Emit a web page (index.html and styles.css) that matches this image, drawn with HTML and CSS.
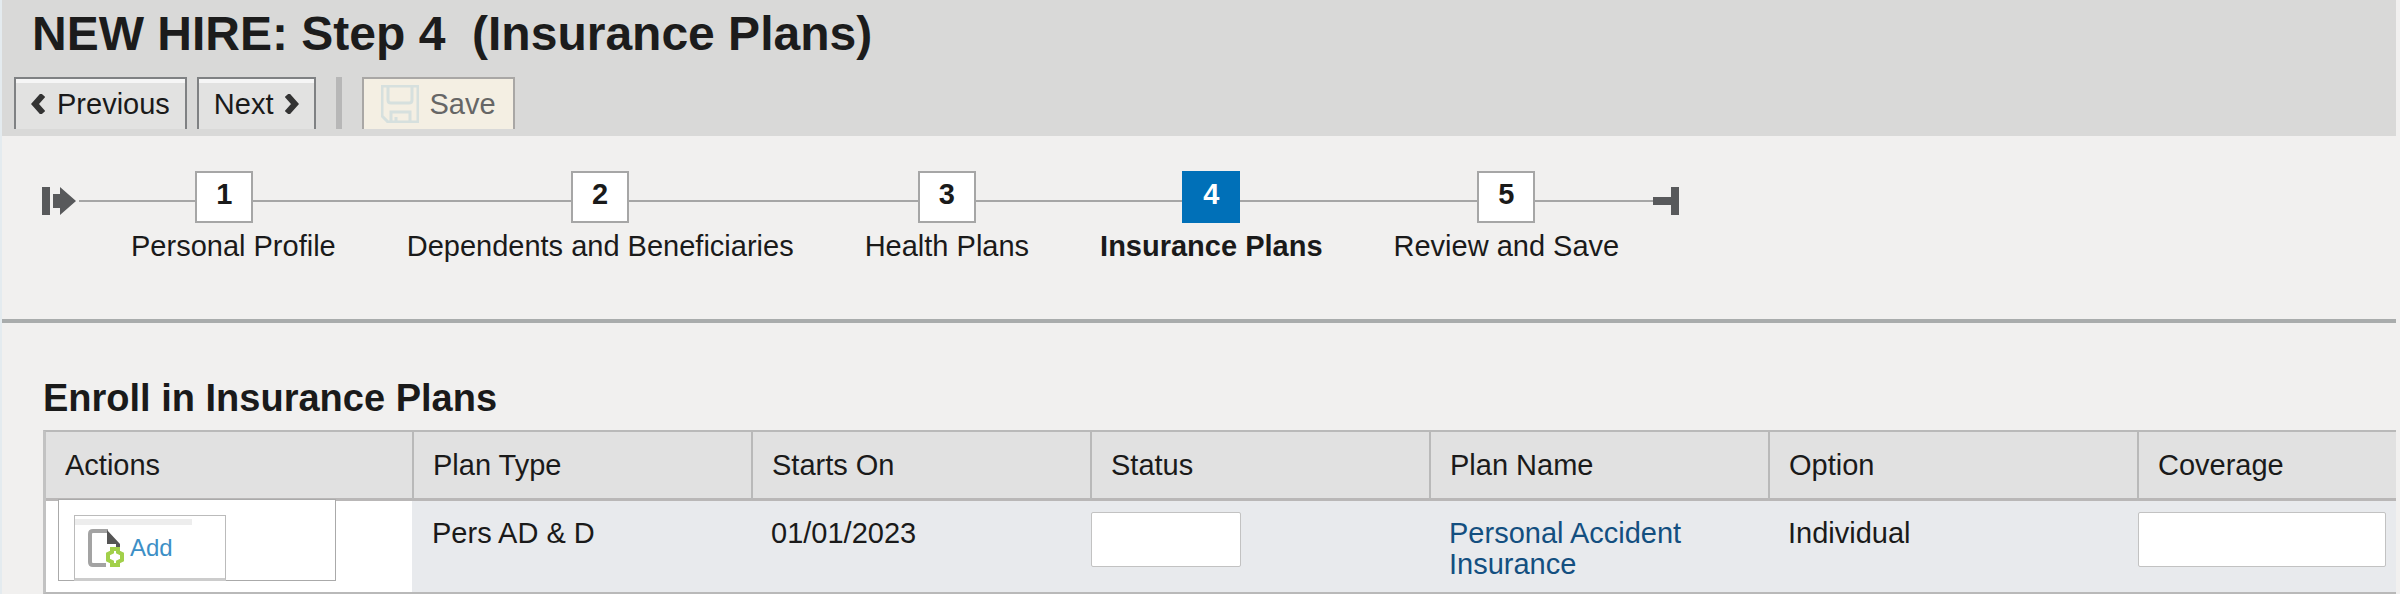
FILE: index.html
```html
<!DOCTYPE html>
<html lang="en">

<head>
    <meta charset="UTF-8">
    <meta name="viewport" content="width=device-width, initial-scale=1.0">
    <title>NEW HIRE: Step 4 (Insurance Plans)</title>
    <link rel="stylesheet" href="styles.css">
</head>

<body>
    <header class="page-header">
        <h1>NEW HIRE: Step 4 &nbsp;(Insurance Plans)</h1>
        <div class="toolbar">
            <button class="nav-button" type="button">
                <svg class="chevron" viewBox="0 0 14 20"><path d="M12 1 L4 10 L12 19"/></svg>
                Previous
            </button>
            <button class="nav-button" type="button">
                Next
                <svg class="chevron" viewBox="0 0 14 20"><path d="M2 1 L10 10 L2 19"/></svg>
            </button>
            <span class="separator"></span>
            <button class="save-button" type="button" disabled>
                <svg class="save-icon" viewBox="0 0 38 38">
                    <path d="M1 1 H37 V37 H7 L1 31 Z"/>
                    <path d="M7 2 V15 Q7 18 10 18 H28 Q31 18 31 15 V2"/>
                    <path d="M10 37 V27 H29 V37 M15 37 V32"/>
                </svg>
                Save
            </button>
        </div>
    </header>

    <nav class="roadmap">
        <svg class="road-start" viewBox="0 0 34 28"><path d="M0 0 H8 V28 H0 Z M11 7 H18 V0 L34 14 L18 28 V21 H11 Z"/></svg>
        <ol class="steps">
            <li><span class="step-number">1</span><span>Personal Profile</span></li>
            <li><span class="step-number">2</span><span>Dependents and Beneficiaries</span></li>
            <li><span class="step-number">3</span><span>Health Plans</span></li>
            <li class="current"><span class="step-number">4</span><span>Insurance Plans</span></li>
            <li><span class="step-number">5</span><span>Review and Save</span></li>
        </ol>
        <svg class="road-end" viewBox="0 0 26 28"><path d="M0 10 H18 V0 H26 V28 H18 V18 H0 Z"/></svg>
    </nav>

    <main class="content">
        <h2>Enroll in Insurance Plans</h2>
        <table class="plans">
            <colgroup>
                <col class="col-actions">
                <col class="col">
                <col class="col">
                <col class="col">
                <col class="col">
                <col class="col-option">
                <col>
            </colgroup>
            <thead>
                <tr>
                    <th>Actions</th>
                    <th>Plan Type</th>
                    <th>Starts On</th>
                    <th id="status">Status</th>
                    <th>Plan Name</th>
                    <th>Option</th>
                    <th id="coverage">Coverage</th>
                </tr>
            </thead>
            <tbody>
                <tr>
                    <td class="actions-cell">
                        <div class="actions-box">
                            <button class="add-button" type="button">
                                <svg class="add-icon" viewBox="0 0 38 38">
                                    <path class="sheet" d="M20 2 H5 Q2 2 2 5 V33 Q2 36 5 36 H18"/>
                                    <path class="fold" d="M19 1 L32 15 V18 H28 V15 H19 Z"/>
                                    <path class="plus" d="M24 20 H30 V23 L34 25 V31 L30 33 V36 H24 V33 L20 31 V25 L24 23 Z"/>
                                </svg>
                                Add
                            </button>
                        </div>
                    </td>
                    <td>Pers AD &amp; D</td>
                    <td>01/01/2023</td>
                    <td class="field-cell"><input class="status-input" type="text" aria-labelledby="status"></td>
                    <td><a href="#">Personal Accident Insurance</a></td>
                    <td>Individual</td>
                    <td class="field-cell"><input class="coverage-input" type="text" aria-labelledby="coverage"></td>
                </tr>
            </tbody>
        </table>
    </main>
</body>

</html>
```

FILE: styles.css
```css
* {
    box-sizing: border-box;
}

body {
    margin: 0;
    padding: 0 4px 0 0;
    border-left: 2px solid #e4ebef;
    background: #f1f0ef;
    color: #1a1a1a;
    font-family: "Liberation Sans", Arial, sans-serif;
    font-size: 29px;
    line-height: 31px;
}

h1, h2 {
    margin: 0;
}

button, input {
    font: inherit;
    color: inherit;
}

.page-header {
    height: 136px;
    background: #d9d9d8;
}

h1 {
    padding: 6px 30px 15px;
    font-size: 48px;
    line-height: 56px;
    color: #1c1c1c;
}

.toolbar {
    display: flex;
    gap: 10px;
    padding-left: 12px;
}

.nav-button, .save-button {
    display: flex;
    align-items: center;
    height: 52px;
    padding: 0 15px;
    border: 2px solid #7f8183;
    border-bottom: none;
    background: #e2e2e1;
}

.nav-button {
    gap: 12px;
    box-shadow: inset 0 4px #f6f6f6;
}

.chevron {
    width: 14px;
    height: 20px;
    fill: none;
    stroke: #333;
    stroke-width: 6;
}

.separator {
    width: 6px;
    margin: 0 10px;
    background: #b7b7b7;
}

.save-button {
    gap: 10px;
    padding: 0 17px;
    border-color: #a9a7a5;
    background: #f4efe3;
    color: #666;
}

.save-icon {
    width: 38px;
    height: 38px;
    fill: none;
    stroke: #d6e0de;
    stroke-width: 3;
}

.roadmap {
    display: flex;
    padding: 35px 40px 0;
    height: 187px;
    border-bottom: 4px solid #a9acac;
}

.road-start, .road-end {
    height: 28px;
    margin-top: 16px;
    fill: #58595b;
}

.road-start {
    width: 34px;
    margin-right: 3px;
}

.road-end {
    width: 26px;
}

.steps {
    display: flex;
    gap: 71px;
    height: 52px;
    margin: 0;
    padding: 0 34px 0 52px;
    list-style: none;
    background: linear-gradient(#a6a6a6, #a6a6a6) 0 29px / 100% 2px no-repeat;
}

.steps li {
    display: flex;
    flex-direction: column;
    align-items: center;
    gap: 8px;
    white-space: nowrap;
}

.step-number {
    width: 58px;
    height: 52px;
    flex-shrink: 0;
    border: 2px solid #a6a6a6;
    background: #fff;
    font-weight: bold;
    line-height: 42px;
    text-align: center;
}

/* the first stop sits nearer to the start of the line */
.steps li:first-child .step-number {
    margin-right: 18px;
}

.current {
    font-weight: bold;
}

.current .step-number {
    border-color: #0070b8;
    background: #0070b8;
    color: #fff;
}

.content {
    padding: 53px 0 0 41px;
}

h2 {
    font-size: 38px;
    line-height: 44px;
    margin-bottom: 10px;
}

.plans {
    width: 100%;
    table-layout: fixed;
    border-collapse: separate;
    border-spacing: 0;
    border: 2px solid #b9b9b9;
    border-left: 3px solid #c2c2c2;
    border-right: none;
}

.col-actions {
    width: 366px;
}

.col {
    width: 339px;
}

.col-option {
    width: 369px;
}

.plans th {
    height: 69px;
    padding: 0 19px;
    border-left: 2px solid #b9b9b9;
    border-bottom: 3px solid #b9b7b7;
    background: #e1e1e1;
    font-weight: normal;
    text-align: left;
}

.plans th:first-child {
    border-left: none;
}

.plans td {
    height: 91px;
    padding: 17px 20px 0;
    background: #e8eaed;
    vertical-align: top;
}

.plans a {
    color: #134f80;
    text-decoration: none;
}

.plans .actions-cell {
    padding: 0 12px;
    background: #fff;
}

.actions-box {
    width: 278px;
    height: 82px;
    margin-top: -2px;
    padding: 15px;
    border: 1px solid #aaa;
    background: #fff;
}

.add-button {
    display: flex;
    align-items: center;
    gap: 4px;
    width: 152px;
    height: 66px;
    padding: 1px 13px 0;
    border: 1px solid #bbb;
    border-bottom: 3px solid #ccc;
    background: linear-gradient(#ededed, #ededed) 0 3px / 117px 6px no-repeat #fff;
    color: #3d8fc6;
    font-size: 24px;
}

.add-icon {
    width: 38px;
    height: 38px;
    fill: none;
    stroke-width: 4;
}

.sheet {
    stroke: #a3a3a3;
}

.add-icon .fold {
    fill: #555;
}

.plus {
    stroke: #a2d04a;
}

.plans .field-cell {
    padding: 11px 10px 0 1px;
}

.field-cell input {
    display: block;
    height: 55px;
    border: 1px solid #c2c2c2;
    border-radius: 2px;
    background: #fff;
}

.status-input {
    width: 150px;
}

.coverage-input {
    width: 100%;
}
```
